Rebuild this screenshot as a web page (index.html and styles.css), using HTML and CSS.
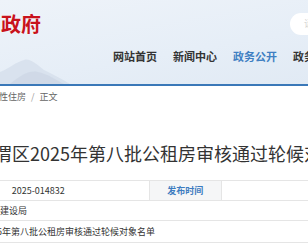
FILE: index.html
```html
<!DOCTYPE html>
<html lang="zh-CN">

<head>
    <meta charset="UTF-8">
    <meta name="viewport" content="width=device-width, initial-scale=1.0">
    <title>临渭区2025年第八批公租房审核通过轮候对象名单</title>
    <link rel="stylesheet" href="styles.css">
</head>

<body>
    <div class="header">
        <svg class="hills" width="120" height="30" viewBox="0 0 120 30">
            <path d="M0 30 L0 18 C10 14 16 8 24 6 C30 4 36 10 44 16 C52 20 60 24 70 30 Z" fill="#d3dde9" opacity="0.7"/>
            <path d="M10 30 C22 20 30 16 38 18 C48 20 56 26 64 30 Z" fill="#c9d4e2" opacity="0.6"/>
        </svg>
        <div class="header-top">
            <div class="logo">临渭区人民政府</div>
            <div class="search">请输入关键词</div>
        </div>
        <ul class="nav">
            <li>网站首页</li>
            <li>新闻中心</li>
            <li class="active">政务公开</li>
            <li>政务服务</li>
        </ul>
    </div>

    <div class="main">
        <div class="crumbs">
            <span>保障性住房</span>
            <span class="sep">/</span>
            <span>正文</span>
        </div>

        <h1 class="title">临渭区2025年第八批公租房审核通过轮候对象名单</h1>

        <div class="info">
            <div class="row">
                <div class="label">索引号</div>
                <div class="value center">2025-014832</div>
                <div class="label">发布时间</div>
                <div class="value center">2025-09-12</div>
            </div>
            <div class="row">
                <div class="label">发布机构</div>
                <div class="value wide">临渭区住房和城乡建设局</div>
            </div>
            <div class="row tall">
                <div class="label">标题</div>
                <div class="value wide">渭南市临渭区2025年第八批公租房审核通过轮候对象名单</div>
            </div>
        </div>
    </div>
</body>

</html>
```

FILE: styles.css
```css
* {
    box-sizing: border-box;
}
body {
    margin: 0;
    width: 308px;
    height: 252px;
    overflow: hidden;
    background: #fff;
    font-family: "Noto Sans CJK SC", "Noto Sans", sans-serif;
    color: #333;
}
.header {
    position: relative;
    height: 86px;
    border-bottom: 2px solid #3a78b8;
    background: linear-gradient(170deg, #eef3f9 0%, #e6eef7 60%, #e1eaf4 100%);
    overflow: hidden;
}
.hills {
    position: absolute;
    left: 0;
    bottom: 0;
}
.header-top {
    display: flex;
    justify-content: space-between;
    align-items: center;
    padding-top: 13px;
    height: 35px;
}
.logo {
    margin-left: -99px;
    font-size: 20px;
    line-height: 22px;
    font-weight: bold;
    color: #c8121c;
    white-space: nowrap;
    text-shadow: 0 0 2px #fff;
}
.search {
    width: 80px;
    height: 22px;
    margin-right: -62px;
    padding-left: 14px;
    border-radius: 11px;
    background: #fff;
    color: #d4d4d4;
    font-size: 9px;
    line-height: 22px;
    white-space: nowrap;
    overflow: hidden;
}
.nav {
    display: flex;
    gap: 16px;
    margin: 14px 0 0;
    padding: 0 0 0 113px;
    list-style: none;
    white-space: nowrap;
}
.nav li {
    font-size: 11px;
    line-height: 14px;
    font-weight: bold;
    color: #333;
}
.nav li.active {
    color: #3f7fc2;
}
.crumbs {
    padding-top: 5px;
    margin-left: -19px;
    font-size: 9px;
    line-height: 12px;
    color: #666;
    white-space: nowrap;
}
.crumbs .sep {
    margin: 0 3px;
    color: #999;
}
.title {
    margin: 38px 0 0 -24px;
    font-size: 18px;
    line-height: 24px;
    font-weight: normal;
    color: #333;
    white-space: nowrap;
}
.info {
    margin: 15px 0 0 -150px;
    width: 600px;
    border-top: 1px solid #e5e5e5;
}
.row {
    display: flex;
    height: 20px;
    border-bottom: 1px solid #e5e5e5;
    font-size: 9px;
    line-height: 19px;
}
.row.tall {
    height: 22px;
    line-height: 21px;
}
.label {
    width: 72px;
    background: #f5f6f7;
    border-right: 1px solid #e5e5e5;
    color: #3d7cc0;
    font-weight: bold;
    text-align: center;
}
.value {
    width: 230px;
    border-right: 1px solid #e5e5e5;
    color: #333;
    white-space: nowrap;
}
.value.center {
    text-align: center;
    padding-left: 6px;
}
.value.wide {
    flex: 1;
    padding-left: 6px;
    border-right: 0;
}
```
